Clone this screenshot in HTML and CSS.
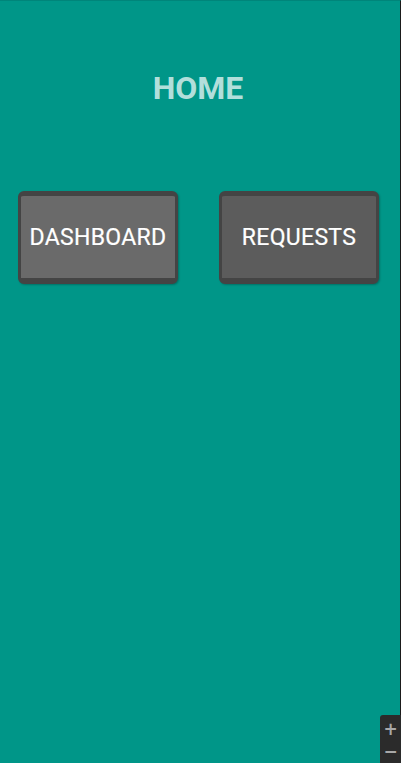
FILE: index.html
```html
<!DOCTYPE html>
<html lang="en">
<head>
<meta charset="utf-8">
<title>Home</title>
<link rel="stylesheet" href="styles.css">
</head>
<body>
<div class="screen">
  <header class="header">
    <h1 class="title">HOME</h1>
  </header>
  <main class="actions">
    <button class="tile tile-light" type="button">DASHBOARD</button>
    <button class="tile tile-dark" type="button">REQUESTS</button>
  </main>
  <div class="zoom-ctrl">
    <span class="zoom-btn">+</span>
    <span class="zoom-btn">−</span>
  </div>
</div>
</body>
</html>
```
FILE: styles.css
```css
html, body {
  margin: 0;
  padding: 0;
  height: 100%;
}
body {
  background: #009688;
  font-family: Roboto, "Noto Sans", sans-serif;
  overflow: hidden;
}
.screen {
  position: relative;
  height: 763px;
  box-sizing: border-box;
  border-top: 1px solid #00857a;
  border-right: 1px solid #1b1b1b;
  background: #009688;
}
.header {
  display: flex;
  justify-content: center;
  padding-top: 69px;
}
.title {
  margin: 0;
  font-size: 32px;
  font-weight: 700;
  line-height: 36px;
  color: #b2dfdb;
  letter-spacing: 0;
  transform: translateX(-2px);
}
.actions {
  display: flex;
  justify-content: space-between;
  padding: 85px 21px 0 18px;
}
.tile {
  width: 160px;
  height: 93px;
  box-sizing: border-box;
  border-style: solid;
  border-color: #444444;
  border-width: 5px 3px 6px 3px;
  border-radius: 6px;
  color: #ffffff;
  font-family: Roboto, "Noto Sans", sans-serif;
  font-size: 23px;
  font-weight: 400;
  letter-spacing: 0.3px;
  padding: 0;
  display: flex;
  align-items: center;
  justify-content: center;
  box-shadow: 1px 1px 2px rgba(0,0,0,0.25);
  -webkit-text-stroke: 0.2px #ffffff;
}
.tile-light { background: #6a6a6a; }
.tile-dark { background: #5c5c5c; }
.zoom-ctrl {
  position: absolute;
  right: -1px;
  top: 714px;
  width: 21px;
  height: 49px;
  background: #2b2b2b;
  border-top-left-radius: 3px;
  display: flex;
  flex-direction: column;
  align-items: center;
  padding-top: 3px;
  box-sizing: border-box;
}
.zoom-btn {
  color: #a8a8a8;
  font-family: "DejaVu Sans", sans-serif;
  font-size: 17px;
  font-weight: 700;
  line-height: 22px;
}
```
